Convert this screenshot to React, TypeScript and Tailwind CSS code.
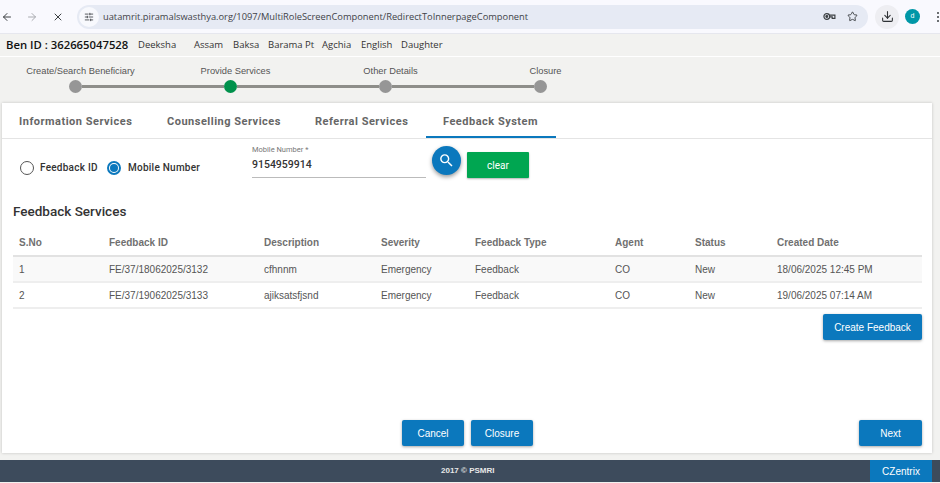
import { ArrowLeft, ArrowRight, Download, SlidersHorizontal, Star, X } from 'lucide-react';
import { MdSearch } from 'react-icons/md';

const steps = [
  { label: 'Create/Search Beneficiary', active: false },
  { label: 'Provide Services', active: true },
  { label: 'Other Details', active: false },
  { label: 'Closure', active: false },
];

const rows = [
  ['1', 'FE/37/18062025/3132', 'cfhnnm', 'Emergency', 'Feedback', 'CO', 'New', '18/06/2025 12:45 PM'],
  ['2', 'FE/37/19062025/3133', 'ajiksatsfjsnd', 'Emergency', 'Feedback', 'CO', 'New', '19/06/2025 07:14 AM'],
];

const heads = ['S.No', 'Feedback ID', 'Description', 'Severity', 'Feedback Type', 'Agent', 'Status', 'Created Date'];

function BlueButton({ label, className }: { label: string; className: string }) {
  return (
    <button className={`h-[26px] rounded-[2px] bg-[#0b78bd] text-[10px] font-medium text-white shadow-[0_1px_3px_rgba(0,0,0,0.35)] ${className}`}>
      {label}
    </button>
  );
}

export default function App() {
  return (
    <div className="flex h-[483px] w-[940px] flex-col overflow-hidden bg-[#f2f2f0] font-['Liberation_Sans',sans-serif]">
      <div className="flex h-[34px] shrink-0 items-center border-b border-[#e6e7ee] bg-[#f9f9fe] pl-[1px] pr-[1px]">
        <ArrowLeft className="h-[12px] w-[12px] text-[#3c4043]" strokeWidth={2} />
        <ArrowRight className="ml-[13px] h-[12px] w-[12px] text-[#a9abb0]" strokeWidth={2} />
        <X className="ml-[14px] h-[12px] w-[12px] text-[#3c4043]" strokeWidth={2} />
        <div className="ml-[13px] flex h-[24px] w-[791px] items-center rounded-full bg-[#e6eaf4] pl-[2px] pr-[10px]">
          <span className="flex h-[20px] w-[20px] items-center justify-center rounded-full bg-[#f8f9fd]">
            <SlidersHorizontal className="h-[10px] w-[10px] text-[#3c4043]" />
          </span>
          <span className="ml-[4px] flex-1 font-['Open_Sans',sans-serif] text-[9.3px] text-[#3f4348]">
            uatamrit.piramalswasthya.org/1097/MultiRoleScreenComponent/RedirectToInnerpageComponent
          </span>
          <svg viewBox="0 0 14 10" className="h-[9px] w-[13px] text-[#3c4043]" fill="none" stroke="currentColor" strokeWidth="1.3">
            <circle cx="4" cy="5" r="3.2" />
            <circle cx="4" cy="5" r="1" fill="currentColor" />
            <path d="M7.5 3.5h5.5v3.5h-3v-1.5h-2.5" />
          </svg>
          <Star className="ml-[11px] h-[11px] w-[11px] text-[#3c4043]" />
        </div>
        <span className="ml-[7px] flex h-[24px] w-[24px] items-center justify-center rounded-full bg-[#eeeef2]">
          <Download className="h-[13px] w-[13px] text-[#2f3236]" />
        </span>
        <span className="ml-[6px] flex h-[15px] w-[15px] items-center justify-center rounded-full bg-[#0097a7] text-[7px] text-white">
          d
        </span>
        <span className="ml-[17px] flex flex-col gap-[2px]">
          <i className="h-[2px] w-[2px] rounded-full bg-[#3c4043]" />
          <i className="h-[2px] w-[2px] rounded-full bg-[#3c4043]" />
          <i className="h-[2px] w-[2px] rounded-full bg-[#3c4043]" />
        </span>
      </div>

      <div className="flex h-[23px] shrink-0 items-center border-b border-white pl-[6px] font-['Open_Sans',sans-serif] text-[9.5px] text-[#333]">
        <span className="w-[132px] text-[11.3px] font-semibold text-[#111]">Ben ID : 362665047528</span>
        <span className="w-[56px]">Deeksha</span>
        <span className="w-[39px]">Assam</span>
        <span className="w-[35px]">Baksa</span>
        <span className="w-[54px]">Barama Pt</span>
        <span className="w-[39px]">Agchia</span>
        <span className="w-[40px]">English</span>
        <span>Daughter</span>
      </div>

      <div className="h-[46px] shrink-0">
        <div className="ml-[3px] flex pt-[8px] text-[9.3px] leading-[13px] text-[#555]">
          {steps.map((step) => (
            <span key={step.label} className="w-[155px] whitespace-nowrap text-center">
              {step.label}
            </span>
          ))}
        </div>
        <div className="ml-[69px] mt-[2px] flex w-[478px] items-center">
          {steps.map((step, i) => (
            <div key={step.label} className={i < 3 ? 'flex flex-1 items-center' : 'flex items-center'}>
              <span className={`h-[13px] w-[13px] shrink-0 rounded-full ${step.active ? 'bg-[#00914c]' : 'bg-[#969696]'}`} />
              {i < 3 && <span className="h-[3px] flex-1 bg-[#8e8e8a]" />}
            </div>
          ))}
        </div>
      </div>

      <div className="ml-[2px] flex h-[350px] w-[930px] shrink-0 flex-col bg-white shadow-[0_0_3px_rgba(0,0,0,0.2)]">
        <div className="flex h-[36px] shrink-0 items-stretch border-b border-[#e4e4e4] font-['Roboto',sans-serif] text-[11px] font-bold tracking-[0.5px] text-[#666]">
          <span className="flex w-[148px] items-center pl-[17px] pt-[4px]">Information Services</span>
          <span className="flex w-[148px] items-center pl-[17px] pt-[4px]">Counselling Services</span>
          <span className="flex w-[128px] items-center pl-[17px] pt-[4px]">Referral Services</span>
          <span className="flex w-[130px] items-center border-b-2 border-[#0b78bd] pl-[17px] pt-[6px]">Feedback System</span>
        </div>

        <div className="flex h-[64px] shrink-0 items-start font-['Roboto',sans-serif]">
          <div className="mt-[21px] flex w-[250px] items-center pl-[18px] text-[10px] font-medium tracking-[0.25px] text-[#333]">
            <span className="h-[14px] w-[14px] rounded-full border border-[#555]" />
            <span className="ml-[6px] w-[60px] whitespace-nowrap">Feedback ID</span>
            <span className="ml-[7px] flex h-[14px] w-[14px] items-center justify-center rounded-full border-2 border-[#0b78bd]">
              <span className="h-[8px] w-[8px] rounded-full bg-[#0b78bd]" />
            </span>
            <span className="ml-[7px] whitespace-nowrap">Mobile Number</span>
          </div>
          <div className="mt-[6px] w-[174px] border-b border-[#bbb] pb-[5px]">
            <div className="text-[7.5px] leading-[10px] text-[#777]">Mobile Number *</div>
            <div className="mt-[3px] text-[10.5px] font-medium leading-[14px] text-[#333]">9154959914</div>
          </div>
          <button className="ml-[6px] mt-[7px] flex h-[29px] w-[29px] items-center justify-center rounded-full bg-[#0b78bd] shadow-[0_2px_4px_rgba(0,0,0,0.4)]">
            <MdSearch className="h-[17px] w-[17px] text-white" />
          </button>
          <button className="ml-[6px] mt-[13px] h-[26px] w-[62px] rounded-[1px] bg-[#00a651] text-[10px] text-white shadow-[0_1px_2px_rgba(0,0,0,0.3)]">
            clear
          </button>
        </div>

        <h2 className="shrink-0 pl-[11px] font-['Roboto',sans-serif] text-[13.5px] font-medium leading-[16px] text-[#333]">Feedback Services</h2>

        <table className="ml-[11px] mt-[10px] w-[909px] shrink-0 table-fixed border-collapse text-[10px] text-[#555]">
          <colgroup>
            <col className="w-[90px]" />
            <col className="w-[155px]" />
            <col className="w-[117px]" />
            <col className="w-[94px]" />
            <col className="w-[140px]" />
            <col className="w-[80px]" />
            <col className="w-[82px]" />
            <col className="w-[151px]" />
          </colgroup>
          <thead>
            <tr className="h-[27px] border-b-2 border-[#e2e2e2]">
              {heads.map((h) => (
                <th key={h} className="pl-[6px] text-left font-bold text-[#707070]">
                  {h}
                </th>
              ))}
            </tr>
          </thead>
          <tbody>
            {rows.map((row, i) => (
              <tr key={row[0]} className={`h-[26px] border-b-2 border-[#eeeeee] ${i === 0 ? 'bg-[#f9f9f9]' : ''}`}>
                {row.map((cell) => (
                  <td key={cell} className="pl-[6px]">
                    {cell}
                  </td>
                ))}
              </tr>
            ))}
          </tbody>
        </table>

        <div className="mt-[5px] flex shrink-0 justify-end pr-[10px]">
          <BlueButton label="Create Feedback" className="w-[99px]" />
        </div>

        <div className="mt-auto flex items-center pb-[7px] pr-[10px]">
          <BlueButton label="Cancel" className="ml-[400px] w-[62px]" />
          <BlueButton label="Closure" className="ml-[7px] w-[62px]" />
          <BlueButton label="Next" className="ml-auto w-[63px]" />
        </div>
      </div>

      <div className="mt-[7px] flex h-[22px] w-full shrink-0 items-stretch bg-[#3d4b5c] text-[8px] font-bold text-[#e8e8e8]">
        <span className="flex w-[870px] items-center pl-[441px]">2017 © PSMRI</span>
        <span className="flex w-[62px] items-center justify-center bg-[#0b78bd] text-[10px] font-normal text-white">CZentrix</span>
      </div>
    </div>
  );
}
